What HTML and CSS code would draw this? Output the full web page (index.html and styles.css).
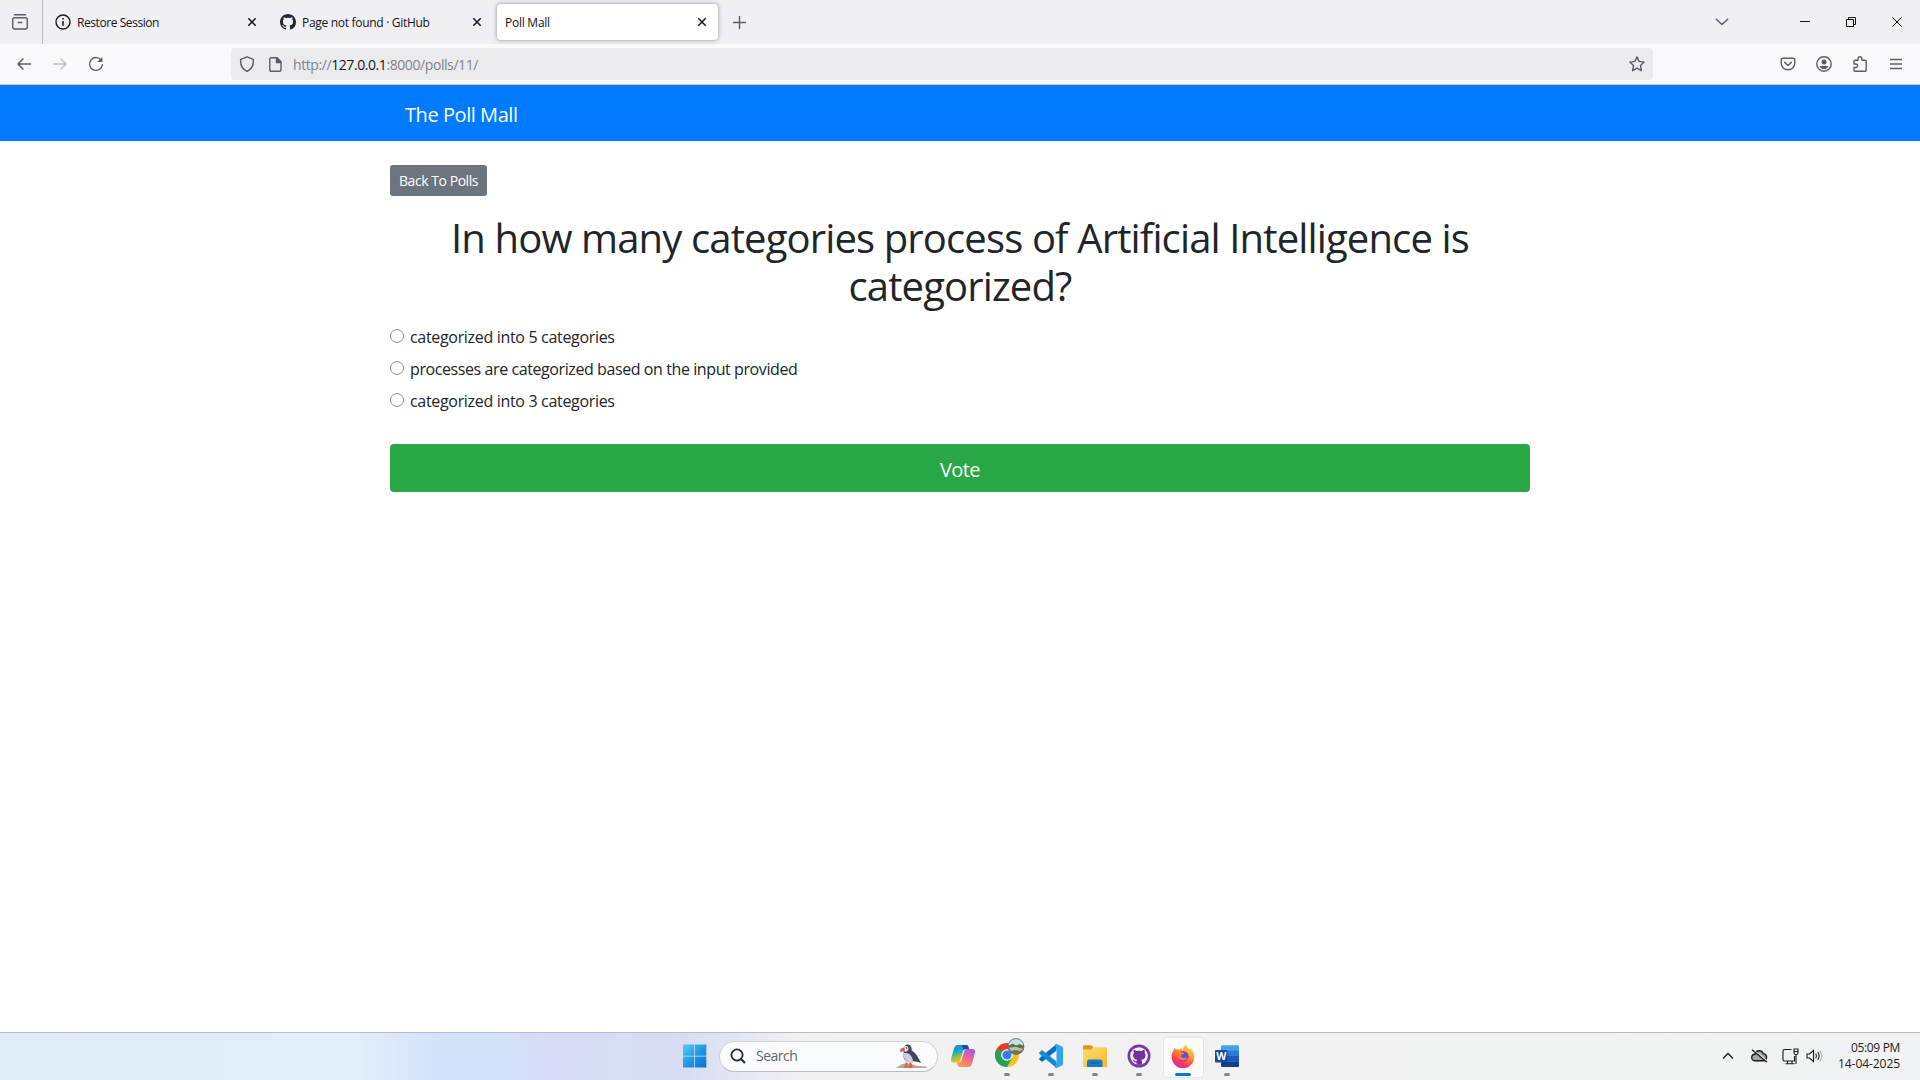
FILE: index.html
```html
<!DOCTYPE html>
<html lang="en">
<head>
<meta charset="utf-8">
<title>Poll Mall</title>
<link rel="stylesheet" href="styles.css">
</head>
<body>
<header class="browser">
  <div class="tabstrip">
    <div class="recent"><svg class="ink" width="16" height="16" viewBox="0 0 16 16"><path d="M2.5.8h11"/><rect x=".7" y="3.7" width="14.6" height="11.3" rx="2"/><path d="M6.3 8.5h3.5"/></svg></div>
    <div class="tab">
      <svg width="16" height="16" viewBox="0 0 16 16" fill="none" stroke="#1b1b1f" stroke-width="1.4"><circle cx="8" cy="8" r="7"/><path d="M8 7v4.7" stroke-width="1.6"/><path d="M8 4v1.6" stroke-width="1.6"/></svg>
      <span class="tab-title t-restore">Restore Session</span>
      <svg class="close" width="10" height="10" viewBox="0 0 10 10"><path d="M1.3 1.3l7.4 7.4M8.7 1.3L1.3 8.7"/></svg>
    </div>
    <div class="tab">
      <svg width="16" height="16" viewBox="0 0 16 16" fill="#24292f"><path d="M8 0C3.58 0 0 3.58 0 8c0 3.54 2.29 6.53 5.47 7.59.4.07.55-.17.55-.38 0-.19-.01-.82-.01-1.49-2.01.37-2.53-.49-2.69-.94-.09-.23-.48-.94-.82-1.13-.28-.15-.68-.52-.01-.53.63-.01 1.08.58 1.23.82.72 1.21 1.87.87 2.33.66.07-.52.28-.87.51-1.07-1.78-.2-3.64-.89-3.64-3.95 0-.87.31-1.59.82-2.15-.08-.2-.36-1.02.08-2.12 0 0 .67-.21 2.2.82.64-.18 1.32-.27 2-.27s1.36.09 2 .27c1.53-1.04 2.2-.82 2.2-.82.44 1.1.16 1.92.08 2.12.51.56.82 1.27.82 2.15 0 3.07-1.87 3.75-3.65 3.95.29.25.54.73.54 1.48 0 1.07-.01 1.93-.01 2.2 0 .21.15.46.55.38A8.01 8.01 0 0 0 16 8c0-4.42-3.58-8-8-8z"/></svg>
      <span class="tab-title t-github">Page not found · GitHub</span>
      <svg class="close" width="10" height="10" viewBox="0 0 10 10"><path d="M1.3 1.3l7.4 7.4M8.7 1.3L1.3 8.7"/></svg>
    </div>
    <div class="tab active">
      <span class="tab-title t-poll">Poll Mall</span>
      <svg class="close" width="10" height="10" viewBox="0 0 10 10"><path d="M1.3 1.3l7.4 7.4M8.7 1.3L1.3 8.7"/></svg>
    </div>
    <svg class="ink newtab" width="13" height="13" viewBox="0 0 13 13"><path d="M6.5.5v12M.5 6.5h12"/></svg>
    <div class="window-controls">
      <svg class="ink" width="14" height="8" viewBox="0 0 14 8"><path d="M1.3 1.2L7 6.6l5.7-5.4"/></svg>
      <svg class="win" width="10" height="10" viewBox="0 0 10 10"><path d="M0 4.500h10"/></svg>
      <svg class="win" width="10" height="10" viewBox="0 0 10 10"><path d="M.5 2.500h7v7h-7zM2.500 2.500v-2h7v7h-2"/></svg>
      <svg class="win" width="10" height="10" viewBox="0 0 10 10"><path d="M.3.3l9.4 9.4M9.7.3L.3 9.700"/></svg>
    </div>
  </div>
  <div class="toolbar">
    <div class="nav-icons">
      <svg class="ink" width="14" height="12" viewBox="0 0 14 12"><path d="M14 6H1M6 .9L.9 6 6 11.100"/></svg>
      <svg class="ink disabled" width="14" height="12" viewBox="0 0 14 12"><path d="M0 6h13M8 .9L13.100 6 8 11.100"/></svg>
      <svg class="ink" width="16" height="16" viewBox="0 0 16 16"><path d="M13.600 4.800A6.400 6.400 0 1 0 14.400 8.600"/><path d="M9.200 6h5.200V.9z" fill="#5b5b66" stroke="none"/></svg>
    </div>
    <div class="urlbar">
      <svg class="ink" width="16" height="16" viewBox="0 0 16 16"><path d="M8 .8l6.300 2.500c.5 5-1.500 9.800-6.300 12C3.200 13.100 1.200 8.300 1.700 3.300z"/></svg>
      <svg class="ink page-icon" width="13" height="15" viewBox="0 0 13 15"><path d="M2.200.8H8l4 4v8q0 1.500-1.500 1.500H2.200Q.8 14.300.8 12.800V2.200Q.8.8 2.200.8z"/><path d="M7.500.8v4.700H12z" fill="#5b5b66"/></svg>
      <span class="url">http://<b>127.0.0.1</b>:8000/polls/11/</span>
      <svg class="ink star" width="16" height="16" viewBox="0 0 16 16"><path d="M8 .9l2.100 4.500 5 .7-3.600 3.500.9 5L8 12.200l-4.400 2.400.9-5L.9 6.100l5-.7z"/></svg>
    </div>
    <div class="tool-icons">
      <svg class="ink" width="16" height="16" viewBox="0 0 16 16"><path d="M2.700 2.200h10.600q1.500 0 1.500 1.500V7c0 4-3 6.800-6.800 6.800S1.200 11 1.200 7V3.700q0-1.500 1.500-1.500zM4.600 6.200L8 9.400l3.400-3.200"/></svg>
      <svg class="ink" width="16" height="16" viewBox="0 0 16 16"><circle cx="8" cy="8" r="7.200"/><circle cx="8" cy="6" r="2.500" fill="#5b5b66" stroke="none"/><path d="M3.700 10h8.600c-.8 2.500-2.400 3-4.300 3s-3.500-.5-4.300-3z" fill="#5b5b66" stroke="none"/></svg>
      <svg class="ink" width="16" height="16" viewBox="0 0 16 16"><path d="M6 4.200V2.700a1.900 1.900 0 0 1 3.800 0v1.500h3.400q1 0 1 1v9q0 1-1 1H3q-1 0-1-1v-2.700h1.800a1.700 1.700 0 0 0 0-3.500H2V5.200q0-1 1-1z"/></svg>
      <svg class="ink menu" width="12" height="12" viewBox="0 0 12 12"><path d="M0 1.500h12M0 6h12M0 10.500h12"/></svg>
    </div>
  </div>
</header>
<main class="page">
  <nav class="navbar"><div class="container"><a class="brand">The Poll Mall</a></div></nav>
  <div class="container content">
    <a class="btn-back">Back To Polls</a>
    <h1 class="question">In how many categories process of Artificial Intelligence is categorized?</h1>
    <form>
      <label class="choice c-short"><input type="radio" name="choice"><span>categorized into 5 categories</span></label>
      <label class="choice"><input type="radio" name="choice"><span>processes are categorized based on the input provided</span></label>
      <label class="choice c-short"><input type="radio" name="choice"><span>categorized into 3 categories</span></label>
      <button class="btn-vote" type="button">Vote</button>
    </form>
  </div>
</main>
<footer class="taskbar">
  <div class="apps">
    <div class="app start"><svg width="24" height="24" viewBox="0 0 24 24"><defs><linearGradient id="wg" gradientUnits="userSpaceOnUse" x1="0" y1="0" x2="24" y2="24"><stop stop-color="#4fd2fb"/><stop offset=".5" stop-color="#1c9ae6"/><stop offset="1" stop-color="#0670cf"/></linearGradient></defs><path fill="url(#wg)" d="M0 .5h11.300v11.200H0zM12 .5h11.300v11.200H12zM0 12.400h11.300v11.200H0zM12 12.400h11.300v11.200H12z"/></svg></div>
    <div class="search">
      <svg width="16" height="16" viewBox="0 0 16 16" fill="none" stroke="#2b2b2b" stroke-width="1.800"><circle cx="7" cy="7" r="5.600"/><path d="M11 11l4 4" stroke-width="2.200"/></svg>
      <span>Search</span>
      <svg class="puffin" width="34" height="26" viewBox="0 0 34 26"><path d="M0 25c4-1 5-4 10-4.500 7-.5 8 1.500 13 2.500l9 .5-1 1.500z" fill="#b8a88d"/><path d="M8.800 9c0-5 1-7.500 4-7.500s4 3 4 6c5 3 6 7 9.500 12.500-4-1-7-2-9-1.500C12 20 8 17 8.500 12z" fill="#44465a"/><path d="M8.500 10.500c3-1 6 0 7.500 2.500s2.500 4.500 1.500 6.500c-5 .5-9.500-3-9-9z" fill="#cfcde8"/><path d="M9 4c2-2 4.500-1 4.500 1.500S11 9 9.500 8.500z" fill="#e9e8ef"/><circle cx="11.500" cy="5" r=".7" fill="#222"/><path d="M9.500 4L5.500 6l-.5 3 4.500-.8z" fill="#e55744"/><path d="M11.500 19.500v4M15.500 19.500v4M9.500 23.800h3M13.500 23.800h4" stroke="#e4573d" stroke-width="2"/></svg>
    </div>
    <div class="app"><svg width="26" height="24" viewBox="0 0 26 24"><defs><linearGradient id="ca" x1="0" y1="0" x2=".3" y2="1"><stop stop-color="#1580d4"/><stop offset=".45" stop-color="#1eabc9"/><stop offset=".7" stop-color="#8cc152"/><stop offset="1" stop-color="#f2c414"/></linearGradient><linearGradient id="cb" x1=".7" y1="0" x2=".3" y2="1"><stop stop-color="#a35ae5"/><stop offset=".5" stop-color="#ef6791"/><stop offset="1" stop-color="#fa9e45"/></linearGradient></defs><path d="M8 1h8c2 0 2.500 1.500 3 4h-3c-2 0-2.600 1-3 2.500L10.500 16c-.7 2-1.500 2.500-3 2.500H4c-3 0-3.500-2-2.800-4.500L4 4.500C4.700 2 6 1 8 1z" fill="url(#ca)"/><path d="M16 1c2 0 2.500 1.500 3 4h-3c-1 0-2 .3-2.600 1.300L12 1z" fill="#1b49b8"/><path d="M18 23h-8c-2 0-2.500-1.500-3-4.500h1.500c2 0 2.600-1 3-2.500L14 8c.6-2 1.500-3 3-3h5c3 0 3.500 2 2.800 4.500L22 19.500c-.7 2.500-2 3.500-4 3.500z" fill="url(#cb)"/></svg></div>
    <div class="app running"><svg class="wide" width="30" height="30" viewBox="0 0 30 30"><circle cx="12" cy="17" r="12" fill="#fbc116"/><path d="M12 17L1.600 11A12 12 0 0 0 12 29l5.200-9z" fill="#20a354"/><path d="M12 17L1.600 11A12 12 0 0 1 22.400 11H12z" fill="#e33b2e"/><circle cx="12" cy="17" r="5.800" fill="#fff"/><circle cx="12" cy="17" r="4.600" fill="#337de6"/><circle cx="21" cy="8.500" r="8.200" fill="#6c7950"/><path d="M13 6.500a8.200 8.200 0 0 1 16 0l-3 2-5-1-5 1z" fill="#c7dfef"/><path d="M14 10l5-2 9 3-3 2-5-1-4 1z" fill="#b4bfb6"/><path d="M14 7.500l4-2 3 2 4-1.500 3.500 2.500-4 1-4-1-4 1z" fill="#5c7041"/><circle cx="21" cy="8.500" r="7.900" fill="none" stroke="#667078" stroke-width=".8"/></svg></div>
    <div class="app running"><svg width="24" height="24" viewBox="0 0 24 24"><path d="M17.500 0v6.500L4 17.300c-.6.500-1.200.5-1.700 0L.5 15.700c-.6-.5-.6-1.200 0-1.700z" fill="#0871bd"/><path d="M17.500 24v-6.500L4 6.700c-.6-.5-1.200-.5-1.700 0L.5 8.300c-.6.500-.6 1.200 0 1.700z" fill="#108ad4"/><path d="M17.500 0L23 2.600q1 .5 1 1.600v15.600q0 1.100-1 1.600L17.500 24q-1 .2-1.500-.5l1.500-5.500V6L16 .5q.5-.7 1.500-.5z" fill="#2ba6ed"/></svg></div>
    <div class="app running"><svg width="24" height="22" viewBox="0 0 24 22"><defs><linearGradient id="fg" x1="0" y1="0" x2="1" y2="1"><stop stop-color="#ffdc70"/><stop offset="1" stop-color="#f5b82c"/></linearGradient></defs><path d="M0 1.500Q0 .3 1.200.3h6.500q.8 0 1.300.6L10.500 2 9 5H0z" fill="#d69b0e"/><path d="M0 4.500h8l2.500-2.300H23q1 0 1 1V21q0 1-1 1H1q-1 0-1-1z" fill="url(#fg)"/><path d="M4 22v-5q0-2.500 2.500-2.500h10.500q2.500 0 2.500 2.500v5z" fill="#167ac2"/><path d="M7.500 18h9" stroke="#0d5d9d"/></svg></div>
    <div class="app running"><svg width="24" height="24" viewBox="0 0 24 24"><circle cx="12" cy="12" r="11.500" fill="#7c35a5"/><circle cx="12" cy="12" r="8.800" fill="#f8f4fa"/><path d="M6.500 6c1.500 0 2.400.6 3 1.100 1.600-.5 3.400-.5 5 0 .6-.5 1.500-1.100 3-1.100.5 1.200.3 2.200.1 2.700.8 1 1 2 .9 3-.2 2.800-2 3.700-4.200 4 .6.800.7 1.500.7 2.500v2.600H9.500v-2.300c-2.300.4-2.700-1-3.400-1.900-.4-.5-.7-.6-.7-.9 1.400-.4 1.900.8 2.600 1.300.6.300 1.100.2 1.700 0 0-.5.200-.9.600-1.300-2.200-.3-4.100-1.300-4.200-4 0-1 .2-2 .8-3-.3-.7-.7-1.700-.4-2.700z" fill="#72309a"/></svg></div>
    <div class="app running current"><svg width="24" height="24" viewBox="0 0 24 24"><defs><linearGradient id="ff" x1=".8" y1="0" x2=".3" y2="1"><stop stop-color="#ffe14a"/><stop offset=".4" stop-color="#ff9a2b"/><stop offset=".75" stop-color="#fb3a5c"/><stop offset="1" stop-color="#dd2aa0"/></linearGradient></defs><path d="M15 .5c.5 2.500 2.500 3.500 4 5.500l.5-1.500C22.500 7.500 23.500 10 23.300 13A11.300 11.300 0 0 1 .7 13C.5 10 1.500 7.500 2.700 6L3 3.800l2 1.700c1.200-.3 2.500-.3 3.500 0L11 4l.3 3c.6-3 1.700-5.300 3.700-6.500z" fill="url(#ff)"/><circle cx="12.200" cy="12.300" r="5.300" fill="#7145d8"/><path d="M3 8c3-2 5-1 7 .3l3.500.7c-.3 1.300-2 1.500-3 2-.7.700-.6 1.700.2 2.300 1.800 1.200 3.800-.2 5.500.6-1 2-3.700 3-6 2.200C6.500 15 5.500 11 3 8z" fill="#ff7b2e"/></svg></div>
    <div class="app running"><svg width="24" height="22" viewBox="0 0 24 22"><path d="M6 1.500Q6 .3 7.200.3h15.600q1.200 0 1.200 1.200V6H6z" fill="#41a2ea"/><path d="M6 5.600h18v5.400H6z" fill="#2b7bd4"/><path d="M6 11h18v5.300H6z" fill="#185abd"/><path d="M6 16.200h18v4.500q0 1.200-1.200 1.200H7.200Q6 21.900 6 20.700z" fill="#123f8c"/><rect y="5" width="12.500" height="12.500" rx="1" fill="#154a9f"/><text x="6.250" y="14.800" text-anchor="middle" class="word-letter">W</text></svg></div>
  </div>
  <div class="tray">
    <svg class="tray-ink" width="12" height="8" viewBox="0 0 12 8"><path d="M1 6.500L6 1.500l5 5" stroke-width="1.400"/></svg>
    <svg class="tray-ink cloud" width="17" height="14" viewBox="0 0 17 14"><path d="M4 11.800a3.300 3.300 0 0 1 0-6.600C5 .8 10.500.6 12.200 4.600a3.700 3.700 0 0 1 .8 7.200z" fill="#a8a8a8" stroke-width="1.400"/><path d="M2.200.8L16.500 12.600" stroke="#f0f0f0" stroke-width="1.300"/><path d="M1 .8l15 12.400" stroke-width="1.400"/></svg>
    <svg class="tray-ink network" width="17" height="17" viewBox="0 0 17 17"><path d="M9.500 1.500h-7q-1.500 0-1.500 1.500v8.500Q1 13 2.500 13h10v-5M5.500 13v2.500M10 13v2.500M3.500 15.700h9M12 1h4v4q0 1.500-2 1.500T12 5zM14 6.500V16M12 3.500h4"/></svg>
    <svg class="tray-ink speaker" width="17" height="14" viewBox="0 0 17 14"><path d="M1 5h2.500L7.500 1.500v11L3.500 9H1z"/><path d="M9.700 4.500q1.500 2.500 0 5M11.800 3q2.700 4 0 8"/><path d="M14 1.500q3.500 5.500 0 11" stroke="#b5b5b5"/></svg>
    <div class="clock"><span class="time">05:09 PM</span><span class="date">14-04-2025</span></div>
  </div>
</footer>
</body>
</html>
```
FILE: styles.css
```css
* { box-sizing: border-box; }
body {
  margin: 0;
  height: 1080px;
  overflow: hidden;
  display: flex;
  flex-direction: column;
  background: #fff;
  color: #212529;
  font-family: "Open Sans", "Noto Sans", sans-serif;
  font-size: 16px;
  line-height: 24px;
}
svg { display: block; flex: none; }
.ink { fill: none; stroke: #5b5b66; stroke-width: 1.4; stroke-linecap: round; stroke-linejoin: round; }

/* Browser chrome */
.browser { height: 85px; flex: none; border-bottom: 1px solid #c8c8cc; }
.tabstrip { height: 44px; display: flex; align-items: center; background: #f0eff4; }
.recent { width: 43px; height: 44px; padding: 14px 0 0 12px; border-right: 1px solid #b9b9be; margin-right: 2px; }
.tab { width: 225px; height: 36px; display: flex; align-items: center; padding: 0 13px 0 10px; }
.tab-title { flex: 1; margin-left: 6px; padding-top: 2px; font-size: 12px; line-height: 16px; color: #15141a; white-space: nowrap; }
.t-restore { letter-spacing: -0.43px; }
.t-github { letter-spacing: -0.3px; }
.t-poll { letter-spacing: -0.25px; margin-left: 0; }
.close { fill: none; stroke: #15141a; stroke-width: 1.5; }
.tab.active { width: 221px; margin: 0 2px; padding: 0 11px 0 8px; background: #fff; border-radius: 4px; box-shadow: 0 0 4px rgba(90, 90, 100, .65); }
.newtab { margin-left: 13px; }
.window-controls { margin-left: auto; display: flex; align-items: center; padding-right: 18px; }
.window-controls .ink { margin-right: 71px; }
.win { fill: none; stroke: #111; stroke-width: 1; }
.win + .win { margin-left: 36px; }
.toolbar { height: 40px; display: flex; align-items: center; background: #f9f9fb; }
.nav-icons { width: 231px; display: flex; align-items: center; gap: 22px; padding-left: 17px; }
.nav-icons .disabled { opacity: .38; }
.nav-icons svg:last-child { margin-left: -1px; }
.urlbar { width: 1422px; height: 32px; display: flex; align-items: center; padding: 0 8px; border-radius: 4px; background: #ebebed; }
.page-icon { margin-left: 14px; }
.url { margin-left: 11px; padding-top: 2px; font-size: 14px; line-height: 20px; letter-spacing: -0.42px; color: #828289; }
.url b { font-weight: 400; color: #15141a; }
.star { margin-left: auto; }
.tool-icons { margin-left: auto; display: flex; align-items: center; gap: 20px; padding-right: 18px; }
.menu { stroke-linecap: butt; margin-left: 2px; }

/* Poll page */
.page { flex: 1; }
.container { width: 1140px; margin: 0 auto; }
.navbar { height: 56px; padding-top: 15px; background: #007bff; }
.brand { display: block; padding-left: 15px; color: #fff; font-size: 20px; line-height: 30px; letter-spacing: -0.44px; }
.content { padding-top: 24px; }
.btn-back { display: block; width: 97px; height: 31px; border-radius: 3px; background: #6c757d; color: #fff; font-size: 14px; line-height: 32px; text-align: center; letter-spacing: -0.45px; }
.question { margin: 18px 0 14px; text-align: center; font-size: 40px; font-weight: 400; line-height: 48px; letter-spacing: -0.86px; }
.choice { display: flex; height: 24px; margin-bottom: 8px; letter-spacing: -0.41px; }
.choice span { padding-top: 1px; }
.c-short { letter-spacing: -0.32px; }
.choice input { appearance: none; width: 14px; height: 14px; margin: 5px 6px 0 0; border: 1px solid #8f8f9d; border-radius: 50%; background: #fff; }
.btn-vote { display: block; width: 100%; height: 48px; margin-top: 32px; padding: 3px 0 0; border: 0; border-radius: 4px; background: #28a745; color: #fff; font: 20px/30px "Open Sans", "Noto Sans", sans-serif; letter-spacing: -0.58px; }

/* Taskbar */
.taskbar {
  height: 48px;
  flex: none;
  display: grid;
  grid-template-columns: 673px 1fr auto;
  border-top: 1px solid #b8bbc2;
  background: linear-gradient(90deg, #deedf8 0, #e1edf6 160px, #e3eff8 350px, #d2e2fb 440px, #d2e2fa 500px, #d7daf6 555px, #d6dff4 620px, #d7dcf3 680px, #e4e7f4 745px, #f1f1f2 800px, #f2f2f2 1200px, #f0f2f3 100%);
}
.apps { grid-column: 2; display: flex; align-items: center; height: 46px; }
.app { position: relative; width: 44px; height: 46px; display: flex; align-items: center; justify-content: center; }
.app svg.wide { margin: -6px 0 0 6px; }
.search { width: 219px; height: 31px; margin: 0 3px 0 2px; display: flex; align-items: center; padding: 0 8px 0 10px; border: 1px solid #d2d3d9; border-bottom-color: #bcbdc4; border-radius: 16px; background: #fafbfd; color: #63646a; font-size: 14px; letter-spacing: -0.5px; }
.search span { margin-left: 10px; }
.puffin { margin-left: auto; }
.running::after { content: ""; position: absolute; left: 19px; bottom: 3px; width: 6px; height: 3px; border-radius: 2px; background: #868686; }
.current::before { content: ""; position: absolute; left: 2px; top: 4px; width: 39px; height: 39px; border: 1px solid #e6e6e6; border-radius: 4px; background: #fbfbfb; }
.current svg { position: relative; }
.current::after { left: 14px; width: 16px; background: #0878d4; }
.word-letter { fill: #fff; font: bold 10.5px "Open Sans", sans-serif; }
.tray { grid-column: 3; display: flex; align-items: center; height: 46px; padding-right: 20px; }
.tray-ink { fill: none; stroke: #1c1c1c; stroke-width: 1.1; }
.cloud { margin-left: 17px; }
.network { margin-left: 14px; }
.speaker { margin-left: 7px; }
.clock { width: 77px; display: flex; flex-direction: column; align-items: flex-end; font-size: 12px; line-height: 16px; color: #1c1c1c; }
.time { letter-spacing: -0.34px; }
.date { letter-spacing: -0.06px; }
```
